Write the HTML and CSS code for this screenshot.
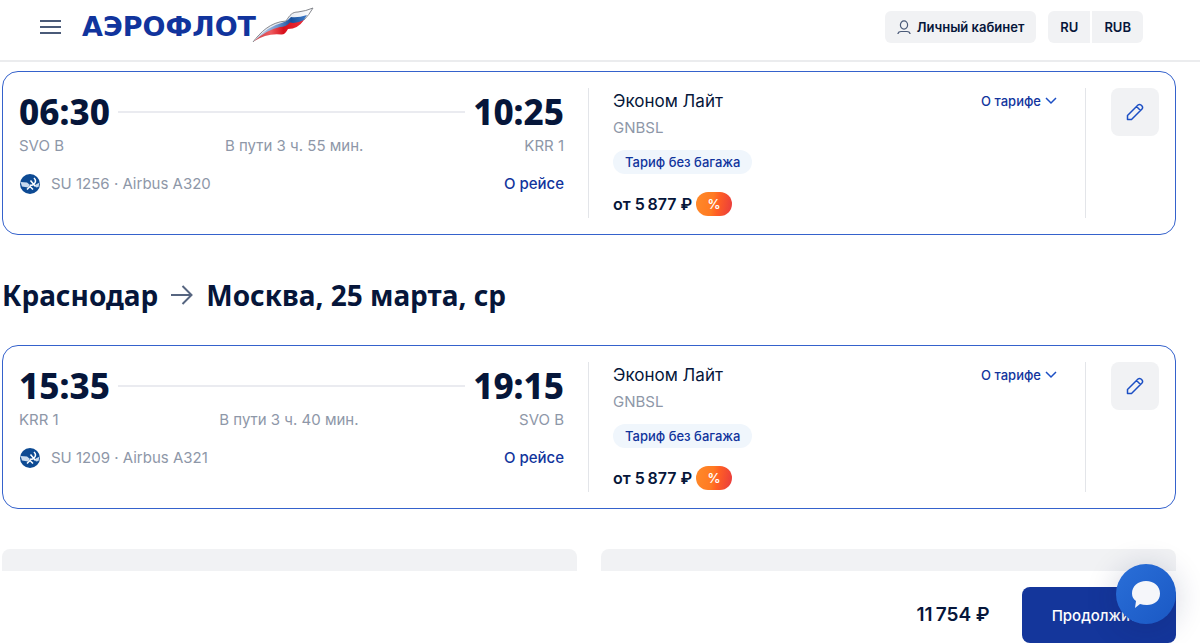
FILE: index.html
```
<!DOCTYPE html>
<html lang="ru">
<head>
    <meta charset="UTF-8">
    <meta name="viewport" content="width=device-width, initial-scale=1.0">
    <title>Аэрофлот</title>
    <link rel="stylesheet" href="styles.css">
</head>
<body>
    <header class="header">
        <button class="menu-btn" aria-label="Меню">
            <svg width="22" height="16" viewBox="0 0 22 16" stroke="#4a5a78" stroke-width="2">
                <path d="M0 2h21M0 8h21M0 14h21"/>
            </svg>
        </button>
        <a class="logo" href="#">
            <span class="logo-text">АЭРОФЛОТ</span>
            <svg class="logo-wing" width="62" height="36" viewBox="0 0 62 36">
                <defs>
                    <linearGradient id="wing-white" x1="0" x2="1">
                        <stop offset="0" stop-color="#f4f6f9"/>
                        <stop offset="0.5" stop-color="#dfe5ee"/>
                        <stop offset="1" stop-color="#fff"/>
                    </linearGradient>
                    <linearGradient id="wing-blue" x1="0" x2="1">
                        <stop offset="0" stop-color="#dbe4f2"/>
                        <stop offset="0.450" stop-color="#6c93cc"/>
                        <stop offset="0.700" stop-color="#164f9c"/>
                        <stop offset="1" stop-color="#3f7cc8"/>
                    </linearGradient>
                    <linearGradient id="wing-red" x1="0" x2="1">
                        <stop offset="0" stop-color="#c0424c"/>
                        <stop offset="0.350" stop-color="#ee5a5e"/>
                        <stop offset="0.600" stop-color="#d8101c"/>
                        <stop offset="1" stop-color="#f0303a"/>
                    </linearGradient>
                </defs>
                <path d="M1 35C8 26 18 15 34 14C38 8 40 5 46 5Q54 4 61 1Q57 8 52 13Q42 12 33 17Q16 21 1 35Z" fill="url(#wing-white)"/>
                <path d="M2 34Q14 20 31 15.500Q36 14 39 10Q46 11 55 8Q52 14 48 17Q40 16 35 20Q17 22 2 34Z" fill="url(#wing-blue)"/>
                <path d="M1 35Q14 23 28 20Q34 20 38 15.500Q44 17 52 13Q46 22 36 22Q33 28 29 27.500Q14 26 1 35Z" fill="url(#wing-red)"/>
                <path d="M1 35C8 26 18 15 34 14C38 8 40 5 46 5Q54 4 61 1Q57 8 52 13" fill="none" stroke="#85888e" stroke-width="1"/>
            </svg>
        </a>
        <div class="header-actions">
            <button class="header-btn account-btn">
                <svg width="14" height="15" viewBox="0 0 14 15" fill="none" stroke="#4a5a78" stroke-width="1.200">
                    <ellipse cx="7" cy="5" rx="3.600" ry="4.200"/>
                    <path d="M1 14V13.500Q1.500 11.500 4 11.500H10Q12.500 11.500 13 13.500V14"/>
                </svg>
                Личный кабинет
            </button>
            <div class="btn-group">
                <button class="header-btn">RU</button>
                <button class="header-btn">RUB</button>
            </div>
        </div>
    </header>

    <main class="content">
        <section class="card">
            <div class="flight">
                <div class="times"><span>06:30</span><i class="line"></i><span>10:25</span></div>
                <div class="airports"><span>SVO B</span><span>В пути 3 ч. 55 мин.</span><span>KRR 1</span></div>
                <div class="plane">
                    <svg width="22" height="22" viewBox="0 0 22 22">
                        <circle cx="11" cy="11" r="10" fill="#0d4a93"/>
                        <path d="M1.500 9L8 9.500L11 12L9 14.500L3 13.500Z" fill="#c9dbef"/>
                        <path d="M20.500 9.500L16 12L17 14.500L19.500 14Z" fill="#c9dbef"/>
                        <path d="M15 5q3 3 0 6q-2 2-4 1M11.500 7.500l5 6M8 16.500l3-3l3 3" stroke="#fff" stroke-width="1.500" fill="none"/>
                    </svg>
                    <span>SU 1256 · Airbus A320</span>
                    <a class="flight-link" href="#">О рейсе</a>
                </div>
            </div>
            <div class="tariff">
                <div class="tariff-head">
                    <span class="tariff-name">Эконом Лайт</span>
                    <button class="tariff-btn">О тарифе
                        <svg width="12" height="8" viewBox="0 0 12 8" fill="none" stroke="#1c4fc4" stroke-width="1.500"><path d="M1 1l5 5l5-5"/></svg>
                    </button>
                </div>
                <div class="tariff-code">GNBSL</div>
                <div class="tag">Тариф без багажа</div>
                <div class="price">от 5&#8201;877 ₽ <span class="percent">%</span></div>
            </div>
            <div class="edit">
                <button class="edit-btn" aria-label="Изменить">
                    <svg width="18" height="18" viewBox="0 0 18 18" fill="none" stroke="#1c4fc4" stroke-width="1.500" stroke-linejoin="round">
                        <path d="M1.500 16.500V12.500L12 2Q13.500 .8 15 2L16 3Q17.200 4.500 16 6L5.500 16.500ZM10.500 3.500l4 4"/>
                    </svg>
                </button>
            </div>
        </section>

        <h2 class="route">
            Краснодар
            <svg width="24" height="20" viewBox="0 0 24 20" fill="none" stroke="#566580" stroke-width="2"><path d="M1 10h21M12.500 1l9 9l-9 9"/></svg>
            Москва, 25 марта, ср
        </h2>

        <section class="card">
            <div class="flight">
                <div class="times"><span>15:35</span><i class="line"></i><span>19:15</span></div>
                <div class="airports"><span>KRR 1</span><span>В пути 3 ч. 40 мин.</span><span>SVO B</span></div>
                <div class="plane">
                    <svg width="22" height="22" viewBox="0 0 22 22">
                        <circle cx="11" cy="11" r="10" fill="#0d4a93"/>
                        <path d="M1.500 9L8 9.500L11 12L9 14.500L3 13.500Z" fill="#c9dbef"/>
                        <path d="M20.500 9.500L16 12L17 14.500L19.500 14Z" fill="#c9dbef"/>
                        <path d="M15 5q3 3 0 6q-2 2-4 1M11.500 7.500l5 6M8 16.500l3-3l3 3" stroke="#fff" stroke-width="1.500" fill="none"/>
                    </svg>
                    <span>SU 1209 · Airbus A321</span>
                    <a class="flight-link" href="#">О рейсе</a>
                </div>
            </div>
            <div class="tariff">
                <div class="tariff-head">
                    <span class="tariff-name">Эконом Лайт</span>
                    <button class="tariff-btn">О тарифе
                        <svg width="12" height="8" viewBox="0 0 12 8" fill="none" stroke="#1c4fc4" stroke-width="1.500"><path d="M1 1l5 5l5-5"/></svg>
                    </button>
                </div>
                <div class="tariff-code">GNBSL</div>
                <div class="tag">Тариф без багажа</div>
                <div class="price">от 5&#8201;877 ₽ <span class="percent">%</span></div>
            </div>
            <div class="edit">
                <button class="edit-btn" aria-label="Изменить">
                    <svg width="18" height="18" viewBox="0 0 18 18" fill="none" stroke="#1c4fc4" stroke-width="1.500" stroke-linejoin="round">
                        <path d="M1.500 16.500V12.500L12 2Q13.500 .8 15 2L16 3Q17.200 4.500 16 6L5.500 16.500ZM10.500 3.500l4 4"/>
                    </svg>
                </button>
            </div>
        </section>

        <div class="panels">
            <div class="panel"></div>
            <div class="panel"></div>
        </div>
    </main>

    <footer class="footer">
        <span class="total">11&#8201;754 ₽</span>
        <button class="next-btn">Продолжить</button>
    </footer>

    <button class="chat-btn" aria-label="Чат">
        <svg width="30" height="30" viewBox="0 0 30 30">
            <path d="M15 2C23 2 29 7 29 14.500S23 26 16 26Q12 26 9 25L4 29L5 22Q1 19 1 14.500C1 7 7 2 15 2Z" fill="#f5f6fa"/>
        </svg>
    </button>
</body>
</html>
```
FILE: styles.css
```
* {
    box-sizing: border-box;
}
body {
    display: flex;
    flex-direction: column;
    height: 100vh;
    margin: 0;
    overflow: hidden;
    font-family: Inter, "Liberation Sans", sans-serif;
    font-size: 15px;
    line-height: 20px;
    color: #06163a;
    background-color: #fff;
}
button {
    font-family: inherit;
    border: none;
    padding: 0;
    cursor: pointer;
}
a {
    text-decoration: none;
}
svg {
    display: block;
    flex: none;
}

/* Header */
.header {
    display: flex;
    align-items: center;
    flex: none;
    height: 62px;
    padding: 0 57px 6px 40px;
    border-bottom: 2px solid #ebecee;
}
.menu-btn {
    margin-right: 20px;
    background: none;
}
.logo {
    display: flex;
    align-items: center;
    color: #11349d;
}
.logo-text {
    font-family: "DejaVu Sans", sans-serif;
    font-size: 27px;
    font-weight: bold;
}
.logo-wing {
    margin: 0 0 4px -4px;
}
.header-actions {
    display: flex;
    gap: 12px;
    margin-left: auto;
}
.header-btn {
    display: flex;
    align-items: center;
    gap: 6px;
    height: 32px;
    padding: 0 12px;
    font-size: 13px;
    font-weight: 600;
    color: #06163a;
    background-color: #f1f2f4;
}
.account-btn {
    border-radius: 6px;
}
.btn-group {
    display: flex;
    gap: 2px;
    border-radius: 6px;
    overflow: hidden;
}

/* Flight cards */
.content {
    flex: 1;
    min-height: 0;
    padding: 9px 24px 0 2px;
    overflow: hidden;
}
.card {
    display: grid;
    grid-template-columns: 8fr 7fr 73px;
    padding: 16px;
    border: 1px solid #3562cc;
    border-radius: 16px;
}
.flight {
    padding-right: 24px;
}
.times {
    display: flex;
    align-items: center;
    gap: 8px;
    font-family: "Noto Sans", sans-serif;
    font-size: 35px;
    font-weight: 800;
    line-height: 48px;
}
.line {
    flex: 1;
    height: 2px;
    background-color: #eaebf0;
}
.airports {
    display: flex;
    justify-content: space-between;
    color: #8e97a8;
}
.plane {
    display: flex;
    align-items: center;
    gap: 10px;
    height: 24px;
    margin-top: 16px;
    color: #8e97a8;
}
.flight-link {
    margin-left: auto;
    font-weight: 500;
    color: #11349d;
}
.tariff {
    padding: 0 28px 2px 24px;
    border-left: 1px solid #e3e5e9;
    border-right: 1px solid #e3e5e9;
}
.tariff-head {
    display: flex;
    align-items: center;
    justify-content: space-between;
    height: 26px;
}
.tariff-name {
    font-size: 17px;
}
.tariff-btn {
    display: flex;
    align-items: center;
    gap: 4px;
    font-size: 13px;
    font-weight: 500;
    color: #11349d;
    background: none;
}
.tariff-code {
    margin-top: 4px;
    color: #8e97a8;
}
.tag {
    width: fit-content;
    margin-top: 12px;
    padding: 0 12px;
    font-size: 13px;
    font-weight: 500;
    line-height: 24px;
    color: #11349d;
    background-color: #f0f6fc;
    border-radius: 12px;
}
.price {
    display: flex;
    align-items: center;
    gap: 4px;
    height: 24px;
    margin-top: 18px;
    font-size: 16px;
    font-weight: 600;
}
.percent {
    width: 36px;
    font-size: 13px;
    line-height: 24px;
    text-align: center;
    color: #fff;
    background: linear-gradient(100deg, #ff8a2a 0%, #ff7a22 45%, #ff5f24 60%, #e83a3f 100%);
    border-radius: 12px;
}
.edit {
    display: flex;
    justify-content: flex-end;
}
.edit-btn {
    display: flex;
    align-items: center;
    justify-content: center;
    width: 48px;
    height: 48px;
    background-color: #f1f2f4;
    border-radius: 8px;
}
.route {
    display: flex;
    align-items: center;
    gap: 12px;
    margin: 40px 0 30px;
    font-family: "Noto Sans", sans-serif;
    font-size: 28px;
    font-weight: bold;
    line-height: 40px;
}
.panels {
    display: flex;
    gap: 24px;
    margin-top: 40px;
}
.panel {
    flex: 1;
    height: 80px;
    background-color: #f1f2f4;
    border-radius: 8px;
}

/* Bottom bar */
.footer {
    display: flex;
    align-items: center;
    justify-content: flex-end;
    gap: 32px;
    flex: none;
    padding: 16px 24px 0;
}
.total {
    font-size: 19px;
    font-weight: 600;
}
.next-btn {
    height: 56px;
    padding: 0 30px;
    font-size: 15px;
    font-weight: 500;
    color: #fff;
    background-color: #14369b;
    border-radius: 8px;
}
.chat-btn {
    position: fixed;
    right: 24px;
    bottom: 19px;
    display: flex;
    align-items: center;
    justify-content: center;
    width: 60px;
    height: 60px;
    background: linear-gradient(135deg, #2a6fd8, #1a58c4);
    border-radius: 50%;
    box-shadow: 0 4px 32px rgba(20, 30, 80, 0.2);
}
```
